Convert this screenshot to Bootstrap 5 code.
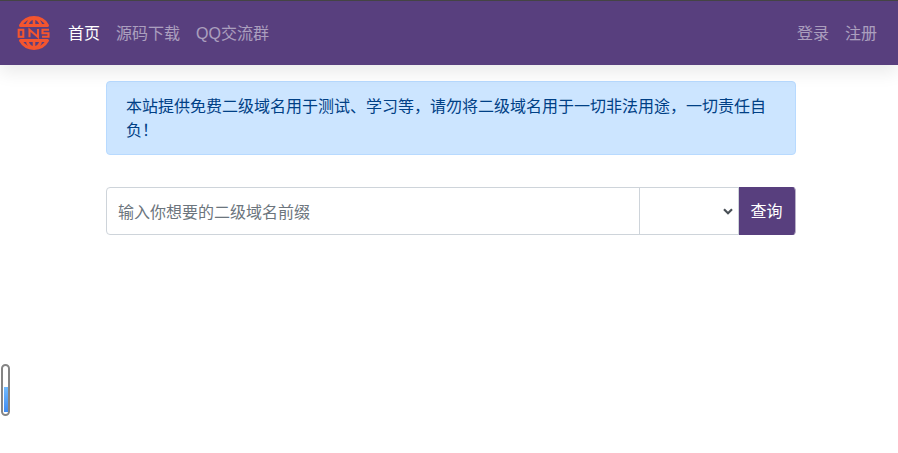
<!DOCTYPE html>
<html lang="zh">
<head>
<meta charset="utf-8">
<title>ONS</title>
<link href="https://cdn.jsdelivr.net/npm/bootstrap@5.3.0/dist/css/bootstrap.min.css" rel="stylesheet">
<style>
html,body{height:100%;overflow:hidden}
body{font-family:"Liberation Sans","Noto Sans CJK SC",sans-serif;font-size:16px;color:#212529;background:#fff}
.top-nav{height:65px;background:#583f7e;border-top:1px solid #444;padding:0 13px 0 16px;box-shadow:0 8px 16px rgba(0,0,0,.08)}
.top-nav .navbar-brand{margin:0 8px 0 0;padding:0;line-height:0}
.top-nav .nav-link{color:rgba(255,255,255,.5);padding:9px 8px 7px;font-size:16px;line-height:24px}
.top-nav .nav-link.active{color:#fff}
.page-wrap{width:690px;margin:16px 0 0 106px}
.note{background:#cce5ff;border:1px solid #b8daff;border-radius:4px;color:#004085;padding:13px 19px 11px;margin-bottom:32px;line-height:24px}
.query-row{height:48px}
.query-row .form-control,.query-row .form-select{height:48px;font-size:16px;border-color:#ced4da;border-radius:0}
.query-row .form-control{padding:8px 11px 4px;border-radius:4px 0 0 4px}
.query-row .form-control::placeholder{color:#6c757d}
.query-row .form-select{flex:0 0 100px;width:100px;margin-left:-1px;padding:6px 12px;background-size:10px 7px;background-position:right 5px center;background-image:url("data:image/svg+xml,%3csvg xmlns='http://www.w3.org/2000/svg' viewBox='0 0 10 7'%3e%3cpath fill='none' stroke='%23495057' stroke-width='2.200' d='M1 1.200l4 4 4-4'/%3e%3c/svg%3e")}
.query-btn{flex:0 0 57px;background:#583f7e;color:#fff;border:1px solid #583f7e;border-right-color:#b9b1c8;border-radius:0 4px 4px 0;padding:7px 2px 5px 0;font-size:16px}
.query-btn:hover{background:#4b356c;color:#fff}
.mini-meter{position:absolute;left:1px;top:364px;width:9px;height:52px;border:2px solid #858585;border-radius:5px;background:#fff;overflow:hidden}
.mini-fill{position:absolute;left:.5px;right:.5px;bottom:2px;background:linear-gradient(#70bbff,#3f8bf2)}
</style>
</head>
<body>
<nav class="navbar navbar-expand top-nav d-flex align-items-center flex-nowrap">
  <a class="navbar-brand d-flex" href="#" aria-label="ONS">
    <svg width="36" height="36" viewBox="0.500 0 36 36" fill="none" stroke="#f4552f">
      <path d="M5 10.500A15.500 15.500 0 0 1 32 10.500H5Z" stroke-width="3" stroke-linejoin="round"/>
      <path d="M5 25.500A15.500 15.500 0 0 0 32 25.500H5Z" stroke-width="3" stroke-linejoin="round"/>
      <path d="M18.500 3V11M18.500 25V33M11.500 11C12 7 14.500 4 18.500 3C22.500 4 25 7 25.500 11M11.500 25C12 29 14.500 32 18.500 33C22.500 32 25 29 25.500 25" stroke-width="2.600"/>
      <rect x="3.200" y="14.800" width="4.600" height="7" stroke-width="2.100"/>
      <path d="M14 22.300V14.800L22.500 22V14" stroke-width="2.100"/>
      <path d="M33.500 14.800H27V18.300H33V21.800H26.500" stroke-width="2.100"/>
    </svg>
  </a>
  <ul class="navbar-nav me-auto flex-row">
    <li class="nav-item"><a class="nav-link active" href="#">首页</a></li>
    <li class="nav-item"><a class="nav-link" href="#">源码下载</a></li>
    <li class="nav-item"><a class="nav-link" href="#">QQ交流群</a></li>
  </ul>
  <ul class="navbar-nav flex-row">
    <li class="nav-item"><a class="nav-link" href="#">登录</a></li>
    <li class="nav-item"><a class="nav-link" href="#">注册</a></li>
  </ul>
</nav>
<main class="page-wrap">
  <div class="note" role="alert">本站提供免费二级域名用于测试、学习等，请勿将二级域名用于一切非法用途，一切责任自负！</div>
  <div class="d-flex query-row">
    <input class="form-control" type="text" placeholder="输入你想要的二级域名前缀">
    <select class="form-select" aria-label="后缀"></select>
    <button class="btn query-btn" type="button">查询</button>
  </div>
</main>
<div class="mini-meter"><div class="mini-fill" style="height:52%"></div></div>
<script src="https://cdn.jsdelivr.net/npm/bootstrap@5.3.0/dist/js/bootstrap.bundle.min.js"></script>
</body>
</html>
